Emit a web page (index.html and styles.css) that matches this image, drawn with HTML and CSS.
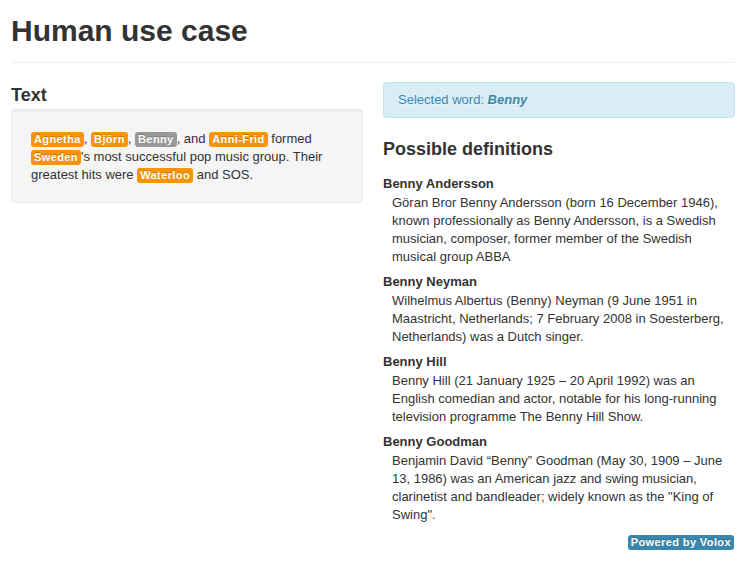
FILE: index.html
```html
<!DOCTYPE html>
<html>
<head>
<meta charset="utf-8">
<title>Human use case</title>
<link rel="stylesheet" href="styles.css">
</head>
<body>
<div class="container">
  <div class="page-header">
    <h1>Human use case</h1>
  </div>
  <div class="row">
    <div class="col">
      <h3>Text</h3>
      <div class="well">
        <span class="label label-warning">Agnetha</span>, <span class="label label-warning">Björn</span>, <span class="label">Benny</span>, and <span class="label label-warning">Anni-Frid</span> formed <span class="label label-warning">Sweden</span>'s most successful pop music group. Their greatest hits were <span class="label label-warning">Waterloo</span> and SOS.
      </div>
    </div>
    <div class="col">
      <div class="alert">Selected word: <b><i>Benny</i></b></div>
      <h3 class="defs-title">Possible definitions</h3>
      <dl class="defs">
        <dt>Benny Andersson</dt>
        <dd>Göran Bror Benny Andersson (born 16 December 1946), known professionally as Benny Andersson, is a Swedish musician, composer, former member of the Swedish musical group ABBA</dd>
        <dt>Benny Neyman</dt>
        <dd>Wilhelmus Albertus (Benny) Neyman (9 June 1951 in Maastricht, Netherlands; 7 February 2008 in Soesterberg, Netherlands) was a Dutch singer.</dd>
        <dt>Benny Hill</dt>
        <dd>Benny Hill (21 January 1925 – 20 April 1992) was an English comedian and actor, notable for his long-running television programme The Benny Hill Show.</dd>
        <dt>Benny Goodman</dt>
        <dd>Benjamin David “Benny” Goodman (May 30, 1909 – June 13, 1986) was an American jazz and swing musician, clarinetist and bandleader; widely known as the "King of Swing".</dd>
      </dl>
      <div class="powered"><span class="label label-info">Powered by Volox</span></div>
    </div>
  </div>
</div>
</body>
</html>
```
FILE: styles.css
```css
html, body {
  margin: 0;
  padding: 0;
}
body {
  font-family: "Liberation Sans", Arial, Helvetica, sans-serif;
  font-size: 13px;
  line-height: 18px;
  color: #333333;
  background: #ffffff;
}
.container {
  margin: 0 7px 0 11px;
}
.page-header {
  padding: 13px 0 13px;
  border-bottom: 1px solid #eeeeee;
  margin-bottom: 19px;
}
h1 {
  margin: 0;
  font-size: 30px;
  line-height: 36px;
  font-weight: bold;
  color: #333333;
}
h3 {
  margin: 0;
  font-size: 18px;
  line-height: 27px;
  font-weight: bold;
  color: #333333;
}
.row {
  display: grid;
  grid-template-columns: 1fr 1fr;
  column-gap: 20px;
}
.col {
  min-width: 0;
}
.well {
  min-height: 20px;
  padding: 20px 19px 18px;
  background-color: #f5f5f5;
  border: 1px solid #eeeeee;
  border: 1px solid rgba(0, 0, 0, 0.05);
  border-radius: 4px;
  box-shadow: inset 0 1px 1px rgba(0, 0, 0, 0.05);
}
.label {
  padding: 1px 3px 2px;
  font-size: 11px;
  font-weight: bold;
  line-height: 13px;
  letter-spacing: 0.4px;
  color: #ffffff;
  text-shadow: 0 -1px 0 rgba(0, 0, 0, 0.25);
  background-color: #999999;
  border-radius: 3px;
  white-space: nowrap;
}
.label-warning {
  background-color: #f89406;
}
.label-info {
  background-color: #3a87ad;
}
.alert {
  padding: 8px 35px 8px 14px;
  margin-bottom: 18px;
  color: #3a87ad;
  background-color: #d9edf7;
  border: 1px solid #bce8f1;
  border-radius: 4px;
  text-shadow: 0 1px 0 rgba(255, 255, 255, 0.5);
}
.defs-title {
  margin-top: 1px;
  margin-bottom: 12px;
}
.defs {
  margin: 0;
}
.defs dt {
  font-weight: bold;
  line-height: 18px;
}
.defs dd {
  margin: 1px 0 7px 9px;
  line-height: 18px;
}
.powered {
  margin-top: 9px;
  text-align: right;
  padding-right: 1px;
}
```
